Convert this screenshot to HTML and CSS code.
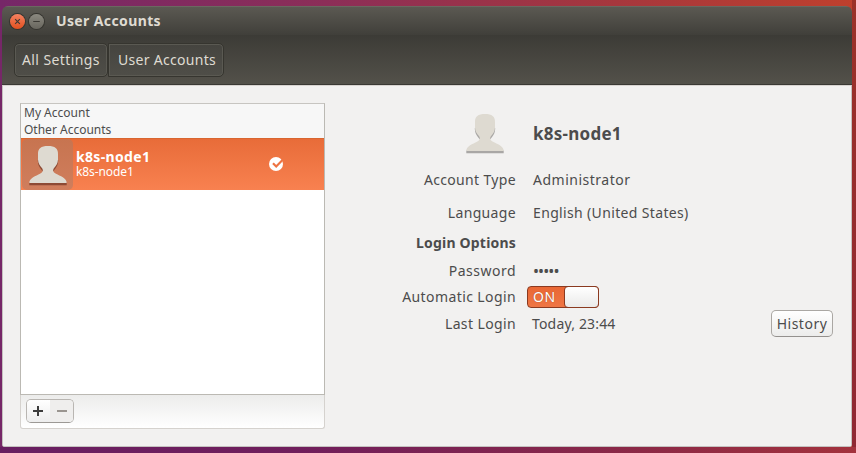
FILE: index.html
```html
<!DOCTYPE html>
<html lang="en">
<head>
<meta charset="utf-8">
<title>User Accounts</title>
<link rel="stylesheet" href="styles.css">
</head>
<body>
<svg width="0" height="0" class="defs">
  <symbol id="person" viewBox="0 0 38 40">
    <path class="person-shadow" d="M.3 36.500H37.700V39.300H.3ZM8.800 14C8.800 19.500 11 22 14 25.500H24C27 22 29.200 19.500 29.200 14Z"/>
    <path class="person-body" d="M19 0C12 0 8.900 2.500 9 8V13.500C9.100 17.500 11 20 13.300 22.500C14.700 25 13.200 26.500 11 27.800C7 30.200 .3 31.800 .3 37H37.700C37.700 31.800 31 30.200 27 27.800C24.800 26.500 23.300 25 24.700 22.500C27 20 28.900 17.500 29 13.500V8C29.100 2.500 26 0 19 0Z"/>
  </symbol>
</svg>
<div class="window">
  <header class="titlebar">
    <span class="wbtn close"><svg viewBox="0 0 16 16"><path d="M5.500 5.500l5 5M10.500 5.500l-5 5"/></svg></span>
    <span class="wbtn minimize"><svg viewBox="0 0 16 16"><path d="M4.500 8h7"/></svg></span>
    <h1 class="title">User Accounts</h1>
  </header>
  <nav class="toolbar">
    <button class="crumb first"><span class="t-all">All Settings</span></button><button class="crumb last"><span class="t-user">User Accounts</span></button>
  </nav>
  <main class="content">
    <section class="sidebar">
      <div class="list">
        <div class="group t-my">My Account</div>
        <div class="group t-other">Other Accounts</div>
        <div class="account">
          <span class="avatar"><svg class="person small"><use href="#person"/></svg></span>
          <span class="names"><b class="t-name">k8s-node1</b><span class="t-sub">k8s-node1</span></span>
          <svg class="check" viewBox="0 0 14 14"><circle cx="7" cy="7" r="7" fill="#fff"/><path d="M4 6.300l3.200 3.200 7.300-7.500" fill="none" stroke="#ee7443" stroke-width="2.200"/></svg>
        </div>
      </div>
      <div class="actions">
        <div class="pair">
          <button class="add"><svg viewBox="0 0 10 10"><path d="M0 5h10M5 0v10"/></svg></button>
          <button class="remove"><svg viewBox="0 0 10 10"><path d="M0 5h10"/></svg></button>
        </div>
      </div>
    </section>
    <section class="details">
      <span class="label pic"><svg class="person"><use href="#person"/></svg></span><b class="value big"><span class="t-big">k8s-node1</span></b>
      <span class="label"><span class="t-type">Account Type</span></span><span class="value"><span class="t-admin">Administrator</span></span>
      <span class="label"><span class="t-lang">Language</span></span><span class="value"><span class="t-eng">English (United States)</span></span>
      <b class="label"><span class="t-opt">Login Options</span></b><span></span>
      <span class="label"><span class="t-pass">Password</span></span><span class="value"><span class="dots">•••••</span></span>
      <span class="label"><span class="t-auto">Automatic Login</span></span><span class="value"><span class="switch"><span class="on">ON</span><span class="knob"></span></span></span>
      <span class="label"><span class="t-last">Last Login</span></span><span class="value last-row"><span class="t-today">Today, 23:44</span><button class="history"><span class="t-hist">History</span></button></span>
    </section>
  </main>
</div>
</body>
</html>
```
FILE: styles.css
```css
* { box-sizing: border-box; }
body {
  margin: 0; padding: 6px 4px 6px 2px; height: 453px; overflow: hidden;
  font: 14px/18px "Noto Sans", "Open Sans", sans-serif; color: #4c4c4c;
  background:
    linear-gradient(90deg, #681e61 0, #701e5c 35%, #8c2946 75%, #a3323d 100%) 0 447px / 100% 6px no-repeat,
    linear-gradient(#9b3128, #8f2733) 852px 0 / 4px 100% no-repeat,
    linear-gradient(90deg, #762768 0, #8c2e58 38%, #a6373d 72%, #bf402d 100%);
}
.defs { position: absolute; }
h1 { margin: 0; font-size: 14px; }
button { font: inherit; color: inherit; margin: 0; padding: 0; white-space: nowrap; }
span, b, h1, div { white-space: nowrap; }
.window { height: 441px; display: flex; flex-direction: column; border-radius: 6px 6px 2px 2px; overflow: hidden; }
.titlebar {
  height: 29px; display: flex; align-items: center; padding-left: 8px;
  background: linear-gradient(#5b5952, #403f3a); border-top: 1px solid #6a6860;
}
.wbtn { width: 15px; height: 15px; border-radius: 50%; margin-right: 4px; box-shadow: 0 0 0 1px #35342f; }
.wbtn svg { display: block; width: 15px; height: 15px; fill: none; stroke: #3b3934; stroke-width: 1.2; }
.close { background: linear-gradient(#f48261, #e2501f); }
.minimize { background: linear-gradient(#8b8980, #68665e); }
.title { color: #dfdbd2; margin-left: 8px; letter-spacing: .38px; }
.toolbar {
  height: 50px; display: flex; align-items: center; padding: 1px 0 0 12px;
  background: linear-gradient(#3c3b36, #53514a); border-bottom: 1px solid #3a3934;
}
.crumb {
  height: 34px; color: #dfdbd2; border: 1px solid #36352f; background: linear-gradient(#45443f, #4f4e48);
  box-shadow: inset 0 0 0 1px #5a5952; text-align: left;
}
.crumb.first { width: 94px; padding-left: 7px; border-radius: 5px; }
.crumb.last { width: 116px; padding-left: 9px; border-radius: 0 5px 5px 0; }
.content {
  flex: 1; display: flex; padding: 17px 18px 17px 17px; background: #f2f1f0;
  border: 1px solid #c5c1bf; border-top-color: #d8d4d0; border-radius: 0 0 2px 2px;
}
.sidebar { width: 305px; height: 326px; display: flex; flex-direction: column; }
.list { height: 292px; border: 1px solid #bbb9b3; border-top-color: #c7c5c1; background: #fff; }
.group { height: 17px; line-height: 17px; padding-left: 3px; font-size: 12px; background: #f7f7f7; }
.account {
  height: 52px; display: flex; align-items: center; color: #fff;
  background: linear-gradient(#e86c39, #f88150); border-top: 1px solid #d96630;
}
.avatar {
  width: 51px; height: 51px; margin-left: 1px; border-radius: 5px; background: linear-gradient(#c77450, #d07e5d);
  display: flex; align-items: center; justify-content: center;
}
.person { width: 38px; height: 40px; color: #a9a7a5; }
.person-shadow { fill: currentColor; }
.person-body { fill: #dedad1; }
.person.small { color: #8d4a34; margin-top: 2px; }
.names { display: flex; flex-direction: column; margin-left: 3px; width: 193px; align-items: flex-start; }
.names b { line-height: 16px; margin-top: -1px; letter-spacing: .34px; }
.t-sub { font-size: 12px; line-height: 14px; letter-spacing: -.1px; }
.check { width: 14px; height: 14px; margin-top: -2px; }
.actions {
  height: 34px; padding: 4px 0 0 5px; border: 1px solid #d5d2ce; border-top: 0;
  border-radius: 0 0 3px 3px; background: linear-gradient(#ececeb, #fff);
}
.pair {
  display: flex; width: 48px; height: 24px; border: 1px solid #b9b6b2; border-bottom-color: #9c9995;
  border-radius: 5px; overflow: hidden;
}
.pair button { width: 23px; border: 0; display: flex; align-items: center; justify-content: center; background: linear-gradient(#fff, #ededed); }
.pair .add { padding-right: 1px; }
.pair .remove { background: #efeeed; }
.pair svg { width: 10px; height: 10px; stroke: #3c3c3c; stroke-width: 2; }
.pair .remove svg { stroke: #9a9590; }
.details {
  flex: 1; display: grid; grid-template-columns: 191px 1fr; column-gap: 17px;
  grid-template-rows: 61px 32px 33px 28px 27px 26px 28px; align-content: start;
}
.label, .value { display: flex; align-items: center; }
.label { justify-content: flex-end; }
.label.pic { padding-right: 12px; padding-top: 1px; }
.big { font-size: 17px; }
.t-big { letter-spacing: .25px; }
.t-all { letter-spacing: .4px; }
.t-user { letter-spacing: .3px; }
.t-type, .t-lang { letter-spacing: .34px; }
.t-admin { letter-spacing: .5px; }
.t-eng { letter-spacing: .35px; }
.t-opt { letter-spacing: .2px; }
.t-pass { letter-spacing: .5px; }
.t-auto { letter-spacing: .4px; }
.t-last { letter-spacing: .38px; }
.t-today { letter-spacing: .17px; }
.t-hist { letter-spacing: .5px; }
.dots { font-size: 16px; letter-spacing: -.9px; }
.switch {
  display: flex; width: 72px; height: 22px; margin-left: -6px; border: 1px solid #8b3a20;
  border-radius: 4px; background: linear-gradient(#e96734, #ef7645); color: #fff;
}
.on { width: 37px; padding-left: 5px; line-height: 20px; letter-spacing: .5px; text-shadow: 0 0 1px #9a431f; }
.knob { width: 35px; height: 22px; margin: -1px -1px; flex: none; border: 1px solid #8b3a20; border-radius: 4px; background: linear-gradient(#fff, #eaeae9); }
.last-row { justify-content: space-between; margin-left: -1px; }
.history {
  width: 62px; height: 27px; margin-top: -1px; border: 1px solid #aaa7a3; border-bottom-color: #94918e;
  border-radius: 5px; background: linear-gradient(#fff, #ececeb);
}
```
